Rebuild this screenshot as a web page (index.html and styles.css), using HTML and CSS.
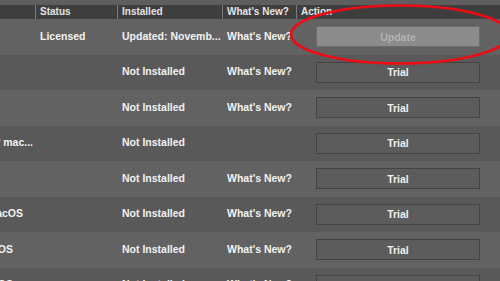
FILE: index.html
```html
<!DOCTYPE html>
<html>
<head>
<meta charset="utf-8">
<link rel="stylesheet" href="styles.css">
</head>
<body>
<div class="page">
  <div class="strip"></div>
  <div class="cols head">
    <div class="cell"></div>
    <div class="cell sep">Status</div>
    <div class="cell sep">Installed</div>
    <div class="cell sep">What's New?</div>
    <div class="cell sep">Action</div>
  </div>
  <div class="rows">
    <div class="cols row light">
      <div class="cell name"></div>
      <div class="cell">Licensed</div>
      <div class="cell">Updated: Novemb...</div>
      <div class="cell">What's New?</div>
      <div class="cell act"><button class="btn disabled">Update</button></div>
    </div>
    <div class="cols row dark">
      <div class="cell name"></div>
      <div class="cell"></div>
      <div class="cell">Not Installed</div>
      <div class="cell">What's New?</div>
      <div class="cell act"><button class="btn">Trial</button></div>
    </div>
    <div class="cols row light">
      <div class="cell name"></div>
      <div class="cell"></div>
      <div class="cell">Not Installed</div>
      <div class="cell">What's New?</div>
      <div class="cell act"><button class="btn">Trial</button></div>
    </div>
    <div class="cols row dark">
      <div class="cell name end33"><span>Dreamweaver for mac...</span></div>
      <div class="cell"></div>
      <div class="cell">Not Installed</div>
      <div class="cell"></div>
      <div class="cell act"><button class="btn">Trial</button></div>
    </div>
    <div class="cols row light">
      <div class="cell name"></div>
      <div class="cell"></div>
      <div class="cell">Not Installed</div>
      <div class="cell">What's New?</div>
      <div class="cell act"><button class="btn">Trial</button></div>
    </div>
    <div class="cols row dark">
      <div class="cell name end23"><span>Bridge for macOS</span></div>
      <div class="cell"></div>
      <div class="cell">Not Installed</div>
      <div class="cell">What's New?</div>
      <div class="cell act"><button class="btn">Trial</button></div>
    </div>
    <div class="cols row light">
      <div class="cell name end13"><span>Audition for macOS</span></div>
      <div class="cell"></div>
      <div class="cell">Not Installed</div>
      <div class="cell">What's New?</div>
      <div class="cell act"><button class="btn">Trial</button></div>
    </div>
    <div class="cols row dark">
      <div class="cell name end13"><span>Animate for macOS</span></div>
      <div class="cell"></div>
      <div class="cell">Not Installed</div>
      <div class="cell">What's New?</div>
      <div class="cell act"><button class="btn">Trial</button></div>
    </div>
  </div>
  <svg class="mark" width="500" height="281" viewBox="0 0 500 281">
    <ellipse cx="400" cy="34.5" rx="109" ry="29" fill="none" stroke="#ee0c14" stroke-width="2.6"/>
  </svg>
</div>
</body>
</html>
```

FILE: styles.css
```css
html, body {
  margin: 0;
  padding: 0;
}
body {
  width: 500px;
  height: 281px;
  overflow: hidden;
  background: #5b5b5b;
  font-family: "Liberation Sans", Arial, sans-serif;
  font-weight: bold;
  color: #f2f2f2;
}
.page {
  position: relative;
  width: 500px;
  height: 281px;
  overflow: hidden;
}
.strip {
  height: 5px;
  background: #5e5e5e;
}
.cols {
  display: grid;
  grid-template-columns: 35px 82px 105px 74px 204px;
}
.head {
  height: 14px;
  background: #3e3e3e;
  font-size: 10px;
  line-height: 14px;
  color: #e4e4e4;
}
.head .cell {
  padding-left: 4px;
  white-space: nowrap;
  overflow: hidden;
}
.head .sep {
  border-left: 1px solid #7a7a7a;
}
.rows {
  display: grid;
  grid-auto-rows: 35.5px;
}
.row {
  font-size: 10.5px;
  align-items: center;
}
.row.light {
  background: #626262;
}
.row.dark {
  background: #595959;
}
.row .cell {
  padding-left: 5px;
  padding-bottom: 2px;
  white-space: nowrap;
  overflow: hidden;
}
.row .name {
  padding-left: 0;
  display: flex;
  justify-content: flex-end;
}
.row .name span {
  flex-shrink: 0;
}
.name.end33 { padding-right: 2px; }
.name.end23 { padding-right: 12px; }
.name.end13 { padding-right: 22px; }
.row .act {
  padding-left: 20px;
  padding-bottom: 0;
  display: flex;
  align-items: center;
}
.btn {
  box-sizing: border-box;
  width: 164px;
  height: 21px;
  margin: 0;
  padding: 0;
  border: 1px solid #434343;
  background: #5c5c5c;
  color: #f0f0f0;
  font-family: "Liberation Sans", Arial, sans-serif;
  font-weight: bold;
  font-size: 10.5px;
  box-shadow: 0 1px 0 rgba(255,255,255,0.08);
}
.btn.disabled {
  background: #8b8b8b;
  border-color: #6c6c6c;
  color: #b3b3b3;
}
.mark {
  position: absolute;
  left: 0;
  top: 0;
}
```
